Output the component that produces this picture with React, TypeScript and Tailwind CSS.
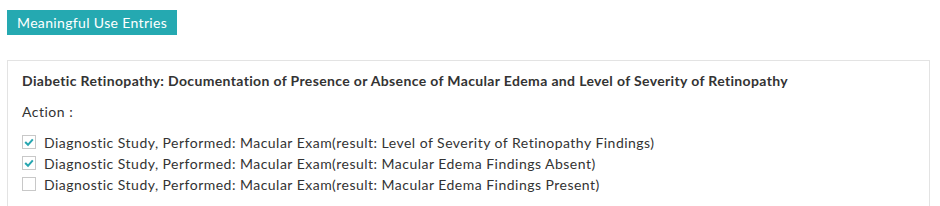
import React from 'react';

const actions = [
  { label: 'Diagnostic Study, Performed: Macular Exam(result: Level of Severity of Retinopathy Findings)', checked: true },
  { label: 'Diagnostic Study, Performed: Macular Exam(result: Macular Edema Findings Absent)', checked: true },
  { label: 'Diagnostic Study, Performed: Macular Exam(result: Macular Edema Findings Present)', checked: false },
];

function Check({ checked }: { checked: boolean }) {
  return (
    <span className="w-[14px] h-[14px] border border-[#c8c8c8] bg-white flex items-center justify-center shrink-0">
      {checked && (
        <svg width="12" height="12" viewBox="0 0 12 12">
          <path d="M2.2 6 L5 8.8 L9.8 3.4" fill="none" stroke="#27a6b0" strokeWidth="2" />
        </svg>
      )}
    </span>
  );
}

export default function App() {
  return (
    <div className="w-[940px] h-[206px] bg-white overflow-hidden pt-[10px] px-[7px] font-['Lato','Noto_Sans',sans-serif] text-[14px] tracking-[0.35px] text-[#333]">
      <div className="inline-flex items-center h-[25px] px-[10px] bg-[#25a9b1] text-white">
        Meaningful Use Entries
      </div>

      <div className="mt-[25px] w-[923px] h-[200px] border border-[#e3e3e3] px-[14px] pt-[10px]">
        <div className="font-bold leading-[19px]">
          Diabetic Retinopathy: Documentation of Presence or Absence of Macular Edema and Level of Severity of Retinopathy
        </div>
        <div className="mt-[12px] leading-[19px] tracking-[0.5px]">Action :</div>
        <div className="mt-[12px] flex flex-col gap-[3px] tracking-[0.48px]">
          {actions.map((a) => (
            <label key={a.label} className="flex items-center gap-[8px] h-[18px]">
              <Check checked={a.checked} />
              <span>{a.label}</span>
            </label>
          ))}
        </div>
      </div>
    </div>
  );
}
